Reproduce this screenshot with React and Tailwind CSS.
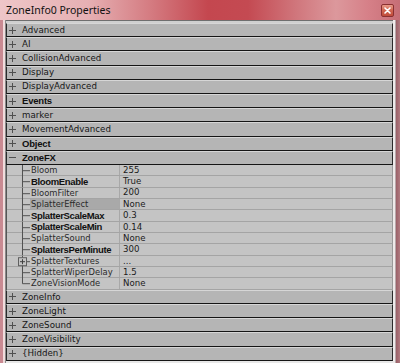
import React from "react";

const topCats = [
  { name: "Advanced" },
  { name: "AI" },
  { name: "CollisionAdvanced" },
  { name: "Display" },
  { name: "DisplayAdvanced" },
  { name: "Events", bold: true },
  { name: "marker" },
  { name: "MovementAdvanced" },
  { name: "Object", bold: true },
  { name: "ZoneFX", bold: true, open: true },
];

const props = [
  { name: "Bloom", value: "255" },
  { name: "BloomEnable", value: "True", bold: true },
  { name: "BloomFilter", value: "200" },
  { name: "SplatterEffect", value: "None", selected: true },
  { name: "SplatterScaleMax", value: "0.3", bold: true },
  { name: "SplatterScaleMin", value: "0.14", bold: true },
  { name: "SplatterSound", value: "None" },
  { name: "SplattersPerMinute", value: "300", bold: true },
  { name: "SplatterTextures", value: "...", expand: true },
  { name: "SplatterWiperDelay", value: "1.5" },
  { name: "ZoneVisionMode", value: "None", last: true },
];

const bottomCats = [
  { name: "ZoneInfo" },
  { name: "ZoneLight" },
  { name: "ZoneSound" },
  { name: "ZoneVisibility" },
  { name: "{Hidden}" },
];

const REG = { fontFamily: '"DejaVu Sans", Verdana, sans-serif' };
const BOLD = { fontFamily: '"Liberation Sans", Arial, sans-serif' };

function PlusMinus({ open }) {
  return (
    <svg width="7" height="7" viewBox="0 0 7 7" className="shrink-0">
      <line x1="0" y1="3.5" x2="7" y2="3.5" stroke="#505050" strokeWidth="1" />
      {!open && <line x1="3.5" y1="0" x2="3.5" y2="7" stroke="#505050" strokeWidth="1" />}
    </svg>
  );
}

function CatRow({ name, bold, open }) {
  return (
    <div className="h-[14.2px] flex items-center bg-[#b5b5b5] border-t border-t-[#d6d6d6] border-b border-b-[#151515] border-l border-l-[#2a2a2a] border-r border-r-[#2a2a2a]">
      <div className="ml-[2px] w-[7px] flex items-center">
        <PlusMinus open={open} />
      </div>
      <span
        className={`ml-[6px] leading-none ${bold ? "text-[9.5px] font-bold text-[#101010] tracking-[-0.2px]" : "text-[8.7px] text-[#161616]"}`}
        style={bold ? BOLD : REG}
      >
        {name}
      </span>
    </div>
  );
}

function PropRow({ name, value, bold, selected, expand, last }) {
  return (
    <div className="h-[11.36px] flex bg-[#c4c4c4] border-b border-b-[#a4a4a4] border-r border-r-[#9a9a9a]">
      <svg width="23" height="11.36" viewBox="0 0 23 11.36" className="shrink-0">
        <line x1="15.5" y1="0" x2="15.5" y2={last ? 5.7 : 11.36} stroke="#505050" strokeWidth="1" />
        <line x1="15.5" y1="5.7" x2="23" y2="5.7" stroke="#505050" strokeWidth="1" />
        {expand && (
          <g>
            <rect x="11.5" y="1.7" width="8" height="8" fill="#c4c4c4" stroke="#606060" strokeWidth="1" />
            <line x1="13" y1="5.7" x2="18" y2="5.7" stroke="#404040" strokeWidth="1" />
            <line x1="15.5" y1="3.2" x2="15.5" y2="8.2" stroke="#404040" strokeWidth="1" />
          </g>
        )}
      </svg>
      <div
        className={`w-[90px] shrink-0 flex items-center border-r border-r-[#a8a8a8] ${selected ? "bg-[#a9a9a9]" : ""}`}
      >
        <span
          className={`pl-[1px] leading-none whitespace-nowrap ${bold ? "text-[9.5px] font-bold text-[#111] tracking-[-0.35px]" : "text-[8.4px] text-[#2a2a2a]"}`}
          style={bold ? BOLD : REG}
        >
          {name}
        </span>
      </div>
      <div className="flex-1 flex items-center pl-[3px]">
        <span className="text-[8.6px] leading-none text-[#1a1a1a]" style={REG}>
          {value}
        </span>
      </div>
    </div>
  );
}

export default function App() {
  return (
    <div
      className="w-[400px] h-[363px] overflow-hidden flex flex-col bg-[#e4c0c4]"
      style={{ fontFamily: '"Liberation Sans", Arial, sans-serif' }}
    >
      <div className="h-[20px] shrink-0 flex items-center justify-between bg-[linear-gradient(90deg,#eec6c8_0%,#e6b0b3_22%,#d47a80_38%,#c4474f_52%,#c44a52_62%,#d0767c_74%,#dc989c_84%,#d68088_92%,#c66e76_100%)] pl-[6px] pr-[6px]">
        <span
          className="text-[10.5px] leading-none text-[#111] pt-[1px]"
          style={{ fontFamily: '"Noto Sans", "Liberation Sans", sans-serif' }}
        >
          ZoneInfo0 Properties
        </span>
        <div className="w-[13px] h-[13px] mt-[1px] flex items-center justify-center rounded-[2px] border border-[#8a3030] bg-[linear-gradient(180deg,#e89a88_0%,#d06450_50%,#c04a3a_100%)]">
          <svg width="7" height="7" viewBox="0 0 7 7">
            <path d="M1 1 L6 6 M6 1 L1 6" stroke="#ffffff" strokeWidth="1.6" strokeLinecap="round" />
          </svg>
        </div>
      </div>
      <div className="flex-1 flex">
        <div className="w-[6px] shrink-0 flex">
          <div className="w-[3px] bg-[#c98a92]" />
          <div className="w-[2px] bg-[#f0dcdc]" />
          <div className="w-[1px] bg-[#8a8a8a]" />
        </div>
        <div className="w-[387px] shrink-0 flex flex-col bg-[#cfcfcf] border-t border-t-[#6e6e6e] pt-[2px]">
          {topCats.map((c) => (
            <CatRow key={c.name} {...c} />
          ))}
          <div className="flex flex-col border-l border-l-[#555]">
            {props.map((p) => (
              <PropRow key={p.name} {...p} />
            ))}
          </div>
          {bottomCats.map((c) => (
            <CatRow key={c.name} {...c} />
          ))}
          <div className="flex-1 bg-[#e8e8e8]" />
        </div>
        <div className="w-[7px] shrink-0 flex">
          <div className="w-[2px] bg-[#eeeaea]" />
          <div className="w-[1px] bg-[#b8a8aa]" />
          <div className="flex-1 bg-[linear-gradient(90deg,#9a6068,#b07a80)]" />
        </div>
      </div>
    </div>
  );
}
